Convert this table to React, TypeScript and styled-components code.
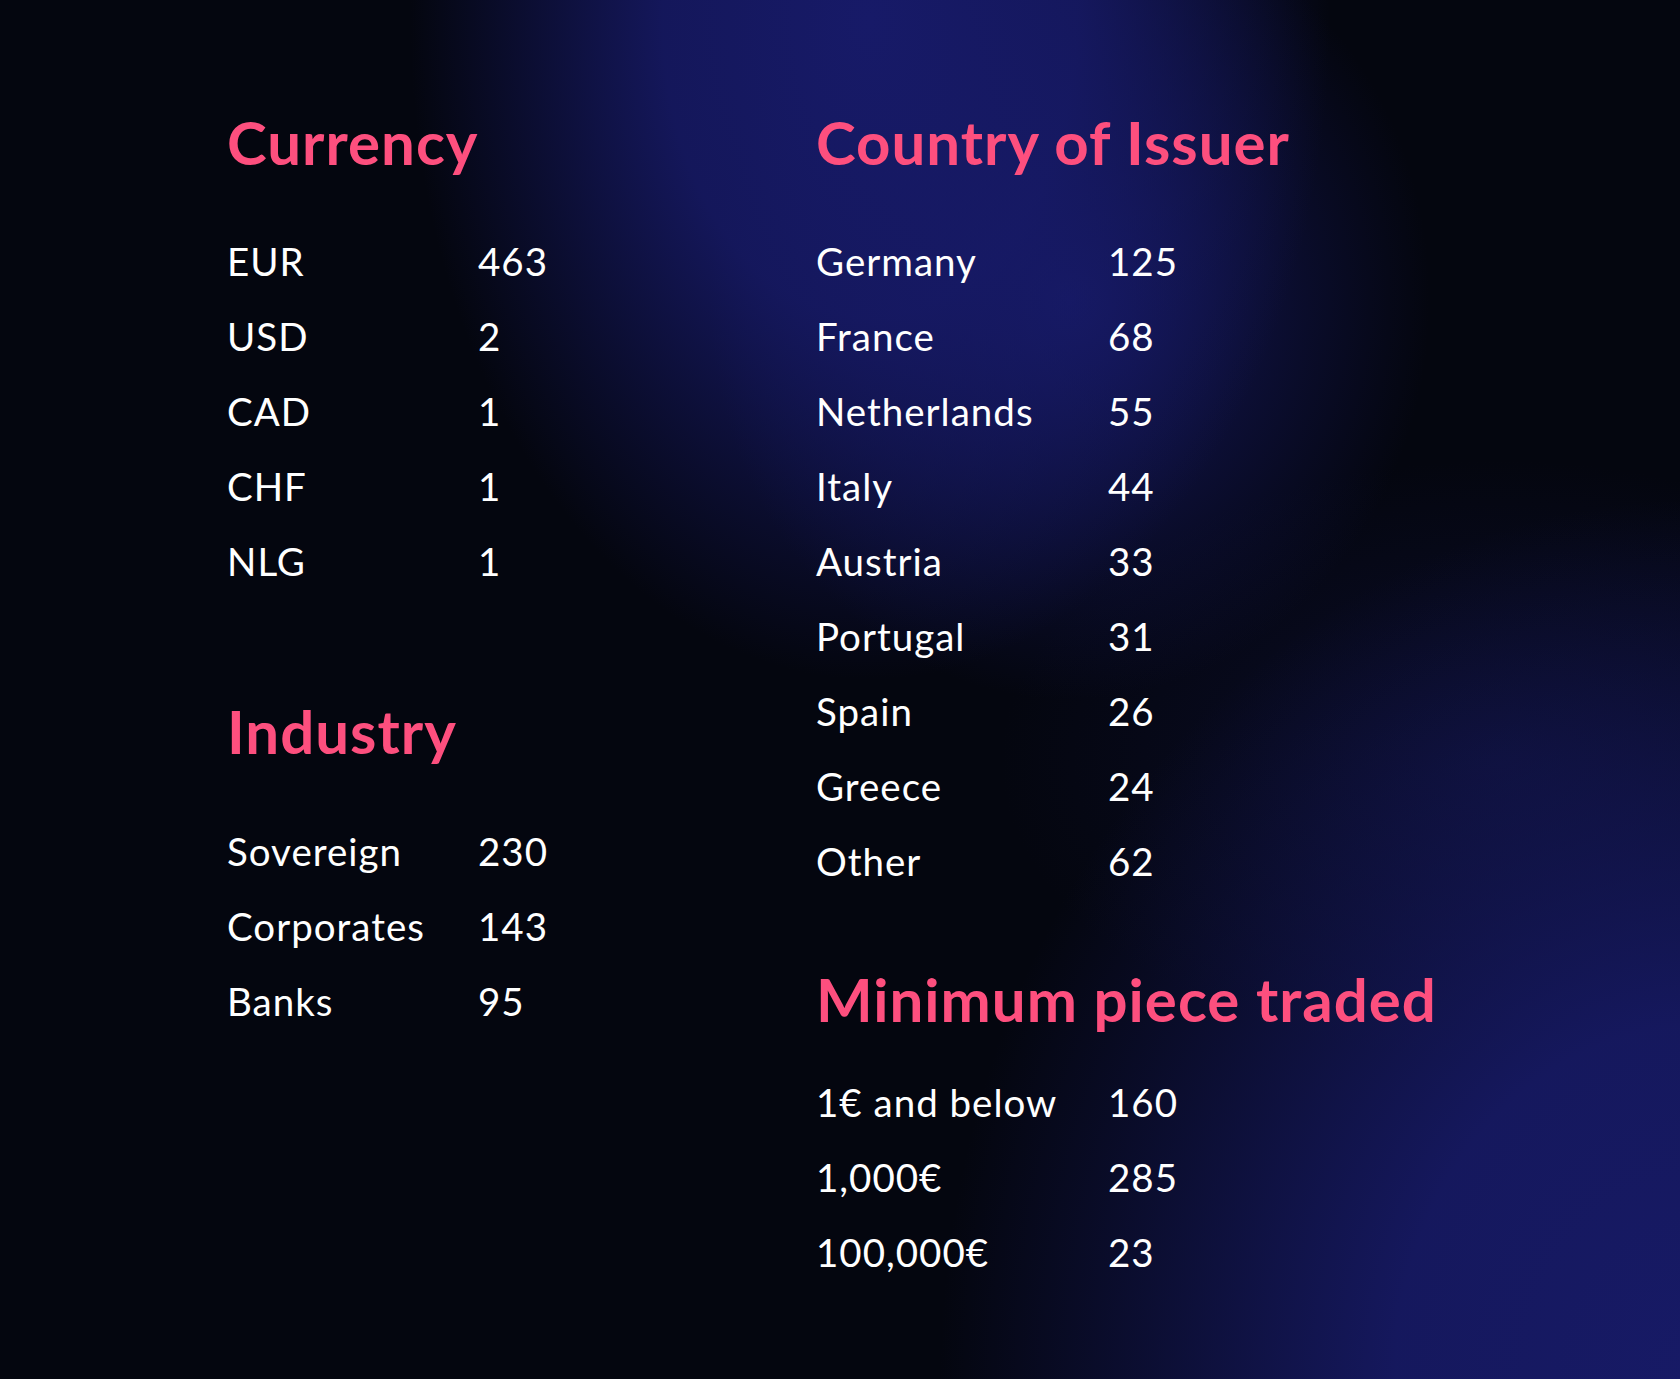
import React from 'react';
import styled, { createGlobalStyle } from 'styled-components';

interface StatRow {
  label: string;
  value: string;
}

interface StatSection {
  title: string;
  rows: StatRow[];
  gapBefore: number;
  gapBelowTitle: number;
}

const GlobalStyle = createGlobalStyle`
  html, body {
    margin: 0;
    padding: 0;
    background: #04060f;
  }
  body {
    font-family: Lato, 'Noto Sans', sans-serif;
    -webkit-font-smoothing: antialiased;
  }
`;

const Page = styled.main`
  min-height: 1379px;
  box-sizing: border-box;
  padding: 106px 0 0 227px;
  display: grid;
  grid-template-columns: 589px 1fr;
  align-items: start;
  background:
    radial-gradient(ellipse 460px 660px at 870px 20px, rgba(23, 26, 104, 1) 0%, rgba(23, 26, 104, 0.85) 45%, rgba(23, 26, 104, 0) 100%),
    radial-gradient(ellipse 360px 400px at 1070px 300px, rgba(23, 26, 104, 0.9) 0%, rgba(23, 26, 104, 0) 100%),
    radial-gradient(ellipse 760px 880px at 1700px 1379px, rgba(23, 26, 102, 1) 0%, rgba(23, 26, 102, 0.9) 40%, rgba(23, 26, 102, 0) 100%),
    radial-gradient(ellipse 500px 300px at 1500px 760px, rgba(18, 20, 70, 0.5) 0%, rgba(18, 20, 70, 0) 100%),
    #04060f;
`;

const Column = styled.div`
  display: flex;
  flex-direction: column;
`;

const Section = styled.section<{ $gapBefore: number }>`
  margin-top: ${({ $gapBefore }) => $gapBefore}px;
`;

const Title = styled.h2<{ $gapBelow: number }>`
  margin: 0 0 ${({ $gapBelow }) => $gapBelow}px;
  color: #fd4f7e;
  font-size: 60px;
  line-height: 72px;
  font-weight: 700;
  letter-spacing: 1px;
  white-space: nowrap;
`;

const Rows = styled.div<{ $labelWidth: number }>`
  display: grid;
  grid-template-columns: ${({ $labelWidth }) => $labelWidth}px auto;
  justify-content: start;
`;

const Cell = styled.span`
  color: #ffffff;
  font-size: 38.5px;
  line-height: 75px;
  font-weight: 400;
  letter-spacing: 1px;
  white-space: nowrap;
`;

const leftSections: StatSection[] = [
  {
    title: 'Currency',
    gapBefore: 0,
    gapBelowTitle: 46,
    rows: [
      { label: 'EUR', value: '463' },
      { label: 'USD', value: '2' },
      { label: 'CAD', value: '1' },
      { label: 'CHF', value: '1' },
      { label: 'NLG', value: '1' },
    ],
  },
  {
    title: 'Industry',
    gapBefore: 96,
    gapBelowTitle: 47,
    rows: [
      { label: 'Sovereign', value: '230' },
      { label: 'Corporates', value: '143' },
      { label: 'Banks', value: '95' },
    ],
  },
];

const rightSections: StatSection[] = [
  {
    title: 'Country of Issuer',
    gapBefore: 0,
    gapBelowTitle: 46,
    rows: [
      { label: 'Germany', value: '125' },
      { label: 'France', value: '68' },
      { label: 'Netherlands', value: '55' },
      { label: 'Italy', value: '44' },
      { label: 'Austria', value: '33' },
      { label: 'Portugal', value: '31' },
      { label: 'Spain', value: '26' },
      { label: 'Greece', value: '24' },
      { label: 'Other', value: '62' },
    ],
  },
  {
    title: 'Minimum piece traded',
    gapBefore: 64,
    gapBelowTitle: 30,
    rows: [
      { label: '1€ and below', value: '160' },
      { label: '1,000€', value: '285' },
      { label: '100,000€', value: '23' },
    ],
  },
];

const renderColumn = (sections: StatSection[], labelWidth: number) => (
  <Column>
    {sections.map((section) => (
      <Section key={section.title} $gapBefore={section.gapBefore}>
        <Title $gapBelow={section.gapBelowTitle}>{section.title}</Title>
        <Rows $labelWidth={labelWidth}>
          {section.rows.map((row) => (
            <React.Fragment key={row.label}>
              <Cell>{row.label}</Cell>
              <Cell>{row.value}</Cell>
            </React.Fragment>
          ))}
        </Rows>
      </Section>
    ))}
  </Column>
);

const App: React.FC = () => (
  <>
    <GlobalStyle />
    <Page>
      {renderColumn(leftSections, 251)}
      {renderColumn(rightSections, 292)}
    </Page>
  </>
);

export default App;
